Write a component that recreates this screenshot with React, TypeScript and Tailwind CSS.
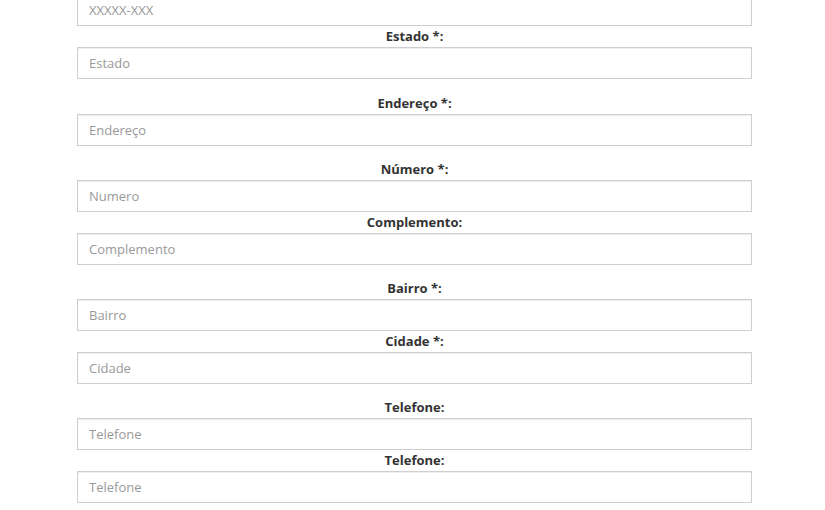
import React from "react";

type Field = { label?: string; placeholder: string; gap?: string };

const fields: Field[] = [
  { placeholder: "XXXXX-XXX" },
  { label: "Estado *:", placeholder: "Estado", gap: "mb-[14px]" },
  { label: "Endereço *:", placeholder: "Endereço", gap: "mb-[13px]" },
  { label: "Número *:", placeholder: "Numero" },
  { label: "Complemento:", placeholder: "Complemento", gap: "mb-[13px]" },
  { label: "Bairro *:", placeholder: "Bairro" },
  { label: "Cidade *:", placeholder: "Cidade", gap: "mb-[13px]" },
  { label: "Telefone:", placeholder: "Telefone" },
  { label: "Telefone:", placeholder: "Telefone" },
];

export default function App() {
  return (
    <div
      className="w-[825px] h-[510px] overflow-hidden bg-white"
      style={{ fontFamily: '"Open Sans", "Noto Sans", sans-serif' }}
    >
      <div className="ml-[77px] w-[675px] mt-[-6px] flex flex-col">
        {fields.map((f, i) => (
          <div key={i} className={f.gap ?? ""}>
            {f.label && (
              <label className="block text-center text-[13px] font-bold leading-[21px] text-[#333]">
                {f.label}
              </label>
            )}
            <input
              type="text"
              placeholder={f.placeholder}
              className="block w-full h-[32px] border border-[#cfcfcf] bg-white px-[11px] text-[13px] text-[#555] placeholder:text-[#999] shadow-[inset_0_1px_1px_rgba(0,0,0,0.075)] outline-none"
            />
          </div>
        ))}
      </div>
    </div>
  );
}
